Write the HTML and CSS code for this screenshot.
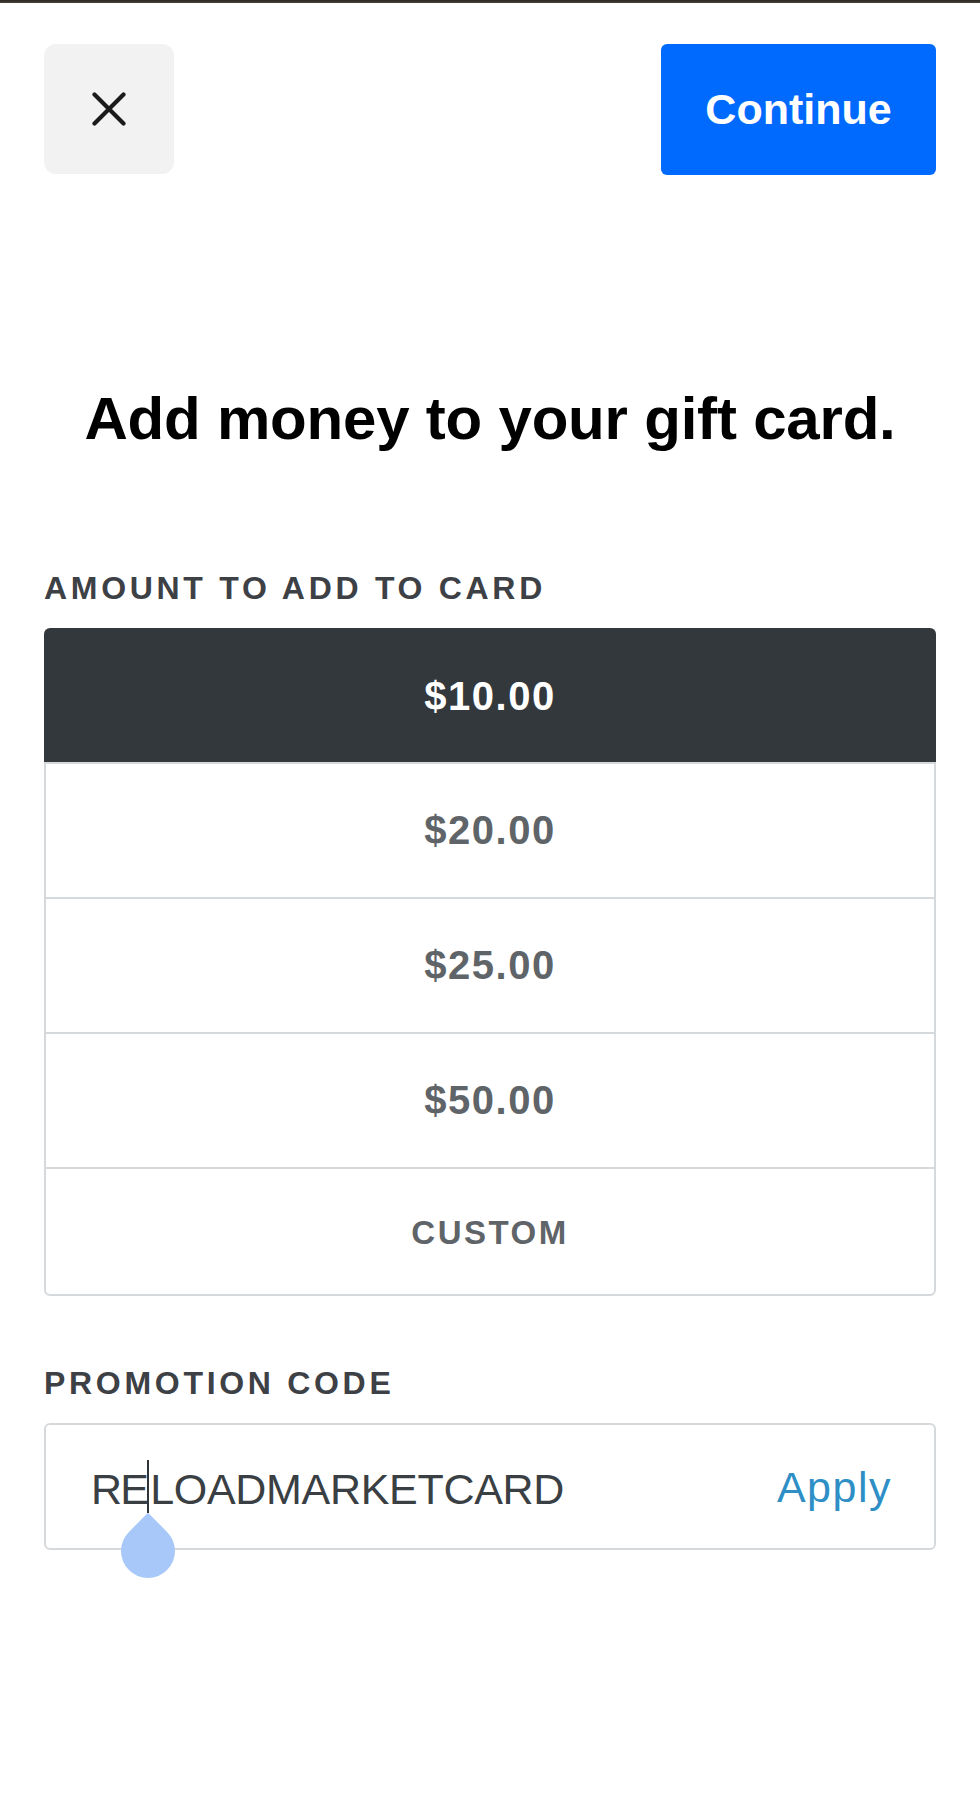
FILE: index.html
```html
<!DOCTYPE html>
<html lang="en">
<head>
<meta charset="utf-8">
<title>Add money to your gift card</title>
<link rel="stylesheet" href="styles.css">
</head>
<body>
<div class="topbar"></div>
<header class="header">
  <button class="close" aria-label="Close">
    <svg width="34" height="34" viewBox="0 0 34 34" aria-hidden="true">
      <path d="M2.5 2.5 L31.5 31.5 M31.5 2.5 L2.5 31.5" stroke="#1b1b1b" stroke-width="4.2" stroke-linecap="round" fill="none"/>
    </svg>
  </button>
  <button class="continue">Continue</button>
</header>
<main class="content">
  <h1 class="title">Add money to your gift card.</h1>
  <div class="label label-amount">AMOUNT TO ADD TO CARD</div>
  <div class="options">
    <div class="opt opt-selected">$10.00</div>
    <div class="opt">$20.00</div>
    <div class="opt">$25.00</div>
    <div class="opt">$50.00</div>
    <div class="opt opt-custom">CUSTOM</div>
  </div>
  <div class="label label-promo">PROMOTION CODE</div>
  <div class="promo">
    <div class="promo-text"><span class="tight">RE</span><span class="cursor"><span class="handle"></span></span>LOADMARKETCARD</div>
    <div class="apply">Apply</div>
  </div>
</main>
</body>
</html>
```
FILE: styles.css
```css
* { box-sizing: border-box; }
html, body { margin: 0; padding: 0; background: #ffffff; }
body {
  font-family: "Liberation Sans", Arial, sans-serif;
  width: 980px;
  min-height: 1815px;
}
.topbar {
  height: 3px;
  background: linear-gradient(to bottom, #2b2724, #4a4238);
}
.header {
  display: flex;
  justify-content: space-between;
  align-items: flex-start;
  padding: 41px 44px 0 44px;
}
.close {
  width: 130px;
  height: 130px;
  border: none;
  border-radius: 12px;
  background: #f2f2f2;
  display: flex;
  align-items: center;
  justify-content: center;
  padding: 0;
}
.continue {
  width: 275px;
  height: 131px;
  border: none;
  border-radius: 6px;
  background: #006aff;
  color: #ffffff;
  font-family: "Liberation Sans", Arial, sans-serif;
  font-weight: 700;
  font-size: 43px;
  padding: 0;
}
.content { padding: 0 44px; }
.title {
  margin: 214px 0 0 0;
  font-size: 60px;
  line-height: 60px;
  font-weight: 700;
  letter-spacing: -0.2px;
  color: #000000;
  text-align: center;
}
.label {
  font-size: 32px;
  line-height: 32px;
  font-weight: 700;
  letter-spacing: 3.7px;
  color: #3d4145;
}
.label-amount { margin-top: 123px; }
.label-promo { margin-top: 71px; }
.options {
  margin-top: 24px;
  display: flex;
  flex-direction: column;
}
.opt {
  height: 135px;
  display: flex;
  align-items: center;
  justify-content: center;
  border-left: 2px solid #d6d9dc;
  border-right: 2px solid #d6d9dc;
  border-top: 2px solid #d6d9dc;
  font-size: 40px;
  font-weight: 700;
  letter-spacing: 1.5px;
  color: #5f6468;
  background: #ffffff;
}
.opt-selected {
  height: 134px;
  background: #33383c;
  border-color: #33383c;
  color: #ffffff;
  border-radius: 6px 6px 0 0;
}
.opt-custom {
  height: 129px;
  padding-top: 3px;
  border-bottom: 2px solid #d6d9dc;
  border-radius: 0 0 6px 6px;
  font-size: 33px;
  letter-spacing: 2.5px;
}
.promo {
  margin-top: 24px;
  height: 127px;
  border: 2px solid #d6d9dc;
  border-radius: 6px;
  display: flex;
  align-items: center;
  justify-content: space-between;
  padding: 1px 42px 0 45px;
}
.promo-text {
  font-size: 43px;
  letter-spacing: -0.3px;
  color: #3a3f44;
  white-space: nowrap;
}
.tight { letter-spacing: -1.8px; }
.cursor {
  display: inline-block;
  position: relative;
  width: 2px;
  height: 53px;
  margin: 0 1px 0 0;
  vertical-align: -9px;
  background: #2f3438;
}
.handle {
  position: absolute;
  left: -26px;
  top: 64px;
  width: 54px;
  height: 54px;
  border-radius: 0 50% 50% 50%;
  background: #a9c8fa;
  transform: rotate(45deg);
}
.apply {
  font-size: 43px;
  letter-spacing: 1.5px;
  color: #2d8fc6;
}
```
